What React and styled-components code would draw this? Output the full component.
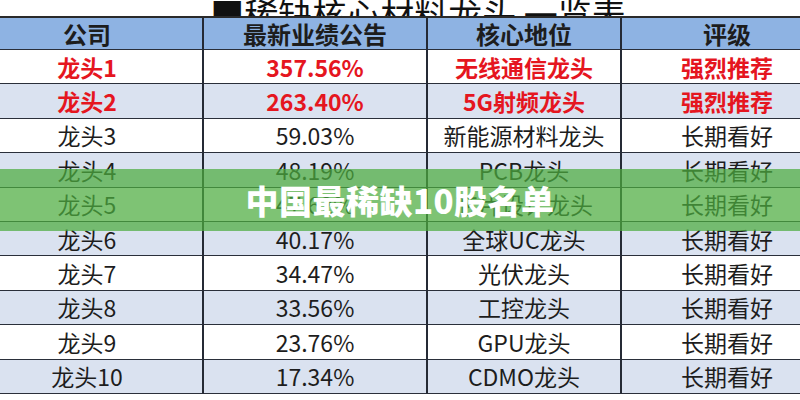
import React from "react";
import styled, { createGlobalStyle } from "styled-components";

const Global = createGlobalStyle`
  html, body { margin: 0; padding: 0; background: #fff; }
  body { font-family: "Noto Sans CJK SC", "Noto Sans", sans-serif; }
`;

const Page = styled.div`
  position: relative;
  width: 800px;
  height: 400px;
  overflow: hidden;
  background: #fff;
`;

const TitleBar = styled.div`
  height: 16px;
  overflow: hidden;
  display: flex;
  justify-content: center;
  align-items: flex-end;
`;

const TitleText = styled.div`
  font-size: 34px;
  line-height: 34px;
  margin-bottom: -15px;
  color: #111;
  white-space: nowrap;
  margin-left: 36px;
`;

const Table = styled.div`
  display: grid;
  grid-template-columns: 232px 224px 194px 210px;
  grid-auto-rows: 34.4px;
  grid-template-rows: 32px;
  margin-left: -28px;
  width: 860px;
  border-top: 2px solid #2a2a2a;
`;

const Cell = styled.div`
  display: flex;
  align-items: center;
  justify-content: center;
  box-sizing: border-box;
  border-right: ${(p) => (p.$last ? "none" : "2px solid #252a35")};
  border-bottom: 1.5px solid #2a2f3a;
  background: ${(p) => (p.$head ? "#8eb3e3" : p.$alt ? "#dae2f0" : "#ffffff")};
  color: ${(p) => (p.$hot ? "#e5161f" : "#1d1d1d")};
  font-weight: ${(p) => (p.$head || p.$hot ? 700 : 400)};
  font-size: ${(p) => (p.$head ? "24px" : "23px")};
  white-space: nowrap;
  font-family: "Noto Sans CJK SC", sans-serif;
`;

const Banner = styled.div`
  position: absolute;
  left: 0;
  top: 169px;
  width: 800px;
  height: 62px;
  background: rgba(76, 172, 62, 0.72);
  display: flex;
  align-items: center;
  justify-content: center;
  color: #fff;
  font-weight: 900;
  font-size: 33px;
  letter-spacing: 0.5px;
  font-family: "Noto Sans CJK SC", sans-serif;
`;

const head = ["公司", "最新业绩公告", "核心地位", "评级"];
const rows = [
  ["龙头1", "357.56%", "无线通信龙头", "强烈推荐", true],
  ["龙头2", "263.40%", "5G射频龙头", "强烈推荐", true],
  ["龙头3", "59.03%", "新能源材料龙头", "长期看好"],
  ["龙头4", "48.19%", "PCB龙头", "长期看好"],
  ["龙头5", "47.62%", "芯片设计龙头", "长期看好"],
  ["龙头6", "40.17%", "全球UC龙头", "长期看好"],
  ["龙头7", "34.47%", "光伏龙头", "长期看好"],
  ["龙头8", "33.56%", "工控龙头", "长期看好"],
  ["龙头9", "23.76%", "GPU龙头", "长期看好"],
  ["龙头10", "17.34%", "CDMO龙头", "长期看好"],
];

export default function App() {
  return (
    <Page>
      <Global />
      <TitleBar>
        <TitleText>■稀缺核心材料龙头 一览表</TitleText>
      </TitleBar>
      <Table>
        {head.map((h, i) => (
          <Cell key={h} $head $last={i === 3}>{h}</Cell>
        ))}
        {rows.map((r, ri) =>
          r.slice(0, 4).map((c, ci) => (
            <Cell key={ri + "-" + ci} $alt={ri % 2 === 1} $hot={r[4]} $last={ci === 3}>
              {c}
            </Cell>
          ))
        )}
      </Table>
      <Banner>中国最稀缺10股名单</Banner>
    </Page>
  );
}
